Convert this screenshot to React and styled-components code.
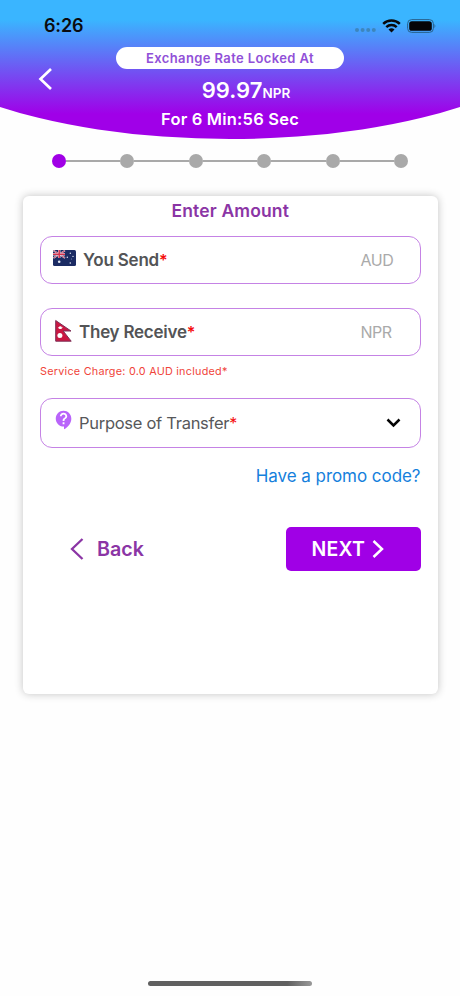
import styled, { createGlobalStyle } from "styled-components";
import { MdContactSupport } from "react-icons/md";

const GlobalStyle = createGlobalStyle`
  * {
    box-sizing: border-box;
  }
  body {
    margin: 0;
    background-color: #fff;
    font-family: Inter, "Liberation Sans", sans-serif;
  }
  svg {
    flex-shrink: 0;
  }
`;

const Screen = styled.div`
  display: flex;
  flex-direction: column;
  width: 460px;
  height: 996px;
  overflow: hidden;
  background-color: #fefefe;
`;

const Header = styled.header`
  height: 139px;
  flex-shrink: 0;
  color: #fff;
  background: linear-gradient(#3ab5ff 20px, #a000e8 114px);
  clip-path: ellipse(345px 126px at 50% 13px);
`;

const StatusBar = styled.div`
  display: flex;
  align-items: center;
  justify-content: space-between;
  height: 47px;
  padding: 4px 23px 0 44px;
  color: #0b0b0f;
`;

const Label = styled.span`
  font-size: ${(props) => props.$size}px;
  font-weight: ${(props) => props.$weight || 400};
  letter-spacing: ${(props) => props.$spacing || 0}px;
  color: ${(props) => props.$color || "inherit"};
  white-space: nowrap;
`;

const StatusIcons = styled.div`
  display: flex;
  align-items: center;
  gap: 6px;
`;

const HeaderBody = styled.div`
  display: grid;
  grid-template-columns: 76px 1fr 76px;
  height: 92px;
`;

const BackArrow = styled.button`
  display: flex;
  align-items: flex-start;
  padding: 21px 0 0 38px;
  border: none;
  background: none;
`;

const Rate = styled.div`
  display: flex;
  flex-direction: column;
  align-items: center;
`;

const Pill = styled.div`
  display: flex;
  align-items: center;
  justify-content: center;
  width: 228px;
  height: 22px;
  border-radius: 11px;
  background-color: #fff;
`;

const RateValue = styled.div`
  display: flex;
  align-items: baseline;
  height: 27px;
  margin-top: 8px;
  padding-left: 32px;
  line-height: 27px;
`;

const Countdown = styled.div`
  height: 22px;
  margin-top: 4px;
  line-height: 22px;
`;

const Stepper = styled.div`
  display: flex;
  align-items: center;
  height: 14px;
  margin: 15px 52px 0;
`;

const StepDot = styled.span`
  width: 14px;
  height: 14px;
  flex-shrink: 0;
  border-radius: 50%;
  background-color: ${(props) => (props.$active ? "#a000e6" : "#a9a9a9")};
`;

const StepLine = styled.span`
  flex: 1;
  height: 2px;
  background-color: #a9a9a9;
`;

const Card = styled.main`
  display: flex;
  flex-direction: column;
  width: 415px;
  height: 498px;
  margin: 28px auto 0;
  padding: 0 17px 0 17.5px;
  border-radius: 6px;
  background-color: #fff;
  box-shadow: 0 0 9px rgba(0, 0, 0, 0.24);
`;

const Title = styled.h1`
  height: 40px;
  margin: 0;
  padding-top: 3px;
  line-height: 23px;
  text-align: center;
  font-size: 18px;
`;

const Field = styled.div`
  display: flex;
  align-items: center;
  flex-shrink: 0;
  height: ${(props) => props.$height || 48}px;
  margin-bottom: ${(props) => props.$gap || 0}px;
  padding: 0 27px 0 12px;
  border: 1px solid #c583e5;
  border-radius: 12px;
`;

const FieldIcon = styled.span`
  display: flex;
  flex-shrink: 0;
  width: ${(props) => props.$width}px;
  padding: 0 0 ${(props) => props.$lift || 0}px ${(props) => props.$left || 0}px;
`;

const FieldEnd = styled.span`
  display: flex;
  width: ${(props) => props.$width || 32}px;
  margin-left: auto;
`;

const Note = styled.div`
  height: 42px;
  padding-top: 6px;
  line-height: 15px;
`;

const Promo = styled.a`
  align-self: flex-end;
  height: 79px;
  padding-top: 17px;
  line-height: 23px;
`;

const Actions = styled.div`
  display: flex;
  align-items: center;
  justify-content: space-between;
  height: 44px;
`;

const BackButton = styled.button`
  display: flex;
  align-items: center;
  gap: 13px;
  padding: 0 0 0 30px;
  border: none;
  background: none;
  font-family: inherit;
`;

const NextButton = styled.button`
  display: flex;
  align-items: center;
  gap: 7px;
  width: 135px;
  height: 44px;
  padding: 0 0 0 26px;
  border: none;
  border-radius: 5px;
  background-color: #a000e6;
  color: #fff;
  font-family: inherit;
`;

const HomeIndicator = styled.div`
  width: 164px;
  height: 5px;
  margin: auto auto 10px;
  border-radius: 3px;
  background: linear-gradient(90deg, #606060 85%, #999);
`;

const Required = styled.span`
  font-size: 16px;
  color: #f50d0d;
`;

const Chevron = ({ width, height, points, color, stroke = 2.5 }) => (
  <svg width={width} height={height} viewBox={`0 0 ${width} ${height}`}>
    <polyline points={points} fill="none" stroke={color} strokeWidth={stroke} />
  </svg>
);

const SignalDots = () => (
  <svg width="21" height="4" viewBox="0 0 21 4" style={{ marginTop: 9 }}>
    {[2, 7.6, 13.2, 18.8].map((x) => (
      <circle key={x} cx={x} cy="2" r="2" fill="#3d86bd" />
    ))}
  </svg>
);

const Wifi = () => (
  <svg width="19" height="14" viewBox="0 0 19 14">
    <g fill="none" stroke="#08080c" strokeWidth="2.5">
      <path d="M1.2 4.9A12 12 0 0 1 17.8 4.9" />
      <path d="M4.3 8.2A7.5 7.5 0 0 1 14.7 8.2" />
    </g>
    <path d="M6.5 10.6a4.3 4.3 0 0 1 6 0L9.5 13.6z" fill="#08080c" />
  </svg>
);

const Battery = () => (
  <svg width="30" height="14" viewBox="0 0 30 14">
    <rect x="0.6" y="0.6" width="25.8" height="12.8" rx="4" fill="none" stroke="#28628e" />
    <rect x="2.2" y="2.2" width="22.6" height="9.6" rx="2.6" fill="#050507" />
    <path d="M27.5 4.8q1.8 2.2 0 4.4z" fill="#28628e" />
  </svg>
);

const AustraliaFlag = () => (
  <svg width="23" height="16" viewBox="0 0 23 16">
    <rect width="23" height="16" rx="1.5" fill="#1b2b63" />
    <path d="M0.5 0.5L12 8M12 0.5L0.5 8" stroke="#e4dbea" strokeWidth="1.5" />
    <path d="M0.5 0.5L12 8M12 0.5L0.5 8" stroke="#c8324f" strokeWidth="0.8" />
    <path d="M6.2 0V8M0 4.2H12" stroke="#eee5ef" strokeWidth="2.4" />
    <path d="M6.2 0V8M0 4.2H12" stroke="#d0304c" strokeWidth="1.5" />
    <g fill="#e2e8f4">
      <circle cx="6.2" cy="11.8" r="1.3" />
      <circle cx="17.3" cy="3.2" r="0.7" />
      <circle cx="14.3" cy="7.3" r="0.7" />
      <circle cx="20" cy="6.4" r="0.7" />
      <circle cx="18.4" cy="9" r="0.4" />
      <circle cx="17.3" cy="13" r="0.8" />
    </g>
  </svg>
);

const NepalFlag = () => (
  <svg width="18" height="24" viewBox="0 0 18 24">
    <path d="M0.7 1.5L16 12H8.2L16.2 22.2H0.7z" fill="#ca1742" stroke="#7d3158" strokeWidth="1" />
    <path d="M2.8 8a2.6 2.6 0 0 0 5 0q-2.5 1.4-5 0z" fill="#fff" />
    <circle cx="5.3" cy="8.6" r="1.4" fill="#fff" />
    <circle cx="4.9" cy="16.6" r="2.5" fill="#fff" />
  </svg>
);

const STEPS = [1, 2, 3, 4, 5, 6];

const App = () => {
  const currentStep = 1;

  return (
    <Screen>
      <GlobalStyle />
      <Header>
        <StatusBar>
          <Label $size={18} $weight={600} $spacing={-0.15}>6:26</Label>
          <StatusIcons>
            <SignalDots />
            <Wifi />
            <Battery />
          </StatusIcons>
        </StatusBar>
        <HeaderBody>
          <BackArrow aria-label="Back">
            <Chevron width={15} height={22} points="13,1 2.5,11 13,21" color="#fff" stroke={2.7} />
          </BackArrow>
          <Rate>
            <Pill>
              <Label $size={13} $weight={600} $spacing={0.38} $color="#9150d8">
                Exchange Rate Locked At
              </Label>
            </Pill>
            <RateValue>
              <Label $size={22} $weight={600}>99.97</Label>
              <Label $size={13.5} $weight={600}>NPR</Label>
            </RateValue>
            <Countdown>
              <Label $size={16.5} $weight={600} $spacing={0.2}>For 6 Min:56 Sec</Label>
            </Countdown>
          </Rate>
        </HeaderBody>
      </Header>

      <Stepper>
        {STEPS.map((step) => [
          step > 1 && <StepLine key={`line-${step}`} />,
          <StepDot key={step} $active={step === currentStep} />,
        ])}
      </Stepper>

      <Card>
        <Title>
          <Label $size={17.5} $weight={600} $spacing={0.15} $color="#8b35a5">Enter Amount</Label>
        </Title>

        <Field $gap={24}>
          <FieldIcon $width={30} $lift={4}>
            <AustraliaFlag />
          </FieldIcon>
          <Label $size={17} $weight={600} $spacing={-0.2} $color="#535456">
            You Send<Required>*</Required>
          </Label>
          <FieldEnd>
            <Label $size={16} $spacing={-0.5} $color="#aaa">AUD</Label>
          </FieldEnd>
        </Field>

        <Field>
          <FieldIcon $width={26} $left={2} $lift={3}>
            <NepalFlag />
          </FieldIcon>
          <Label $size={17} $weight={600} $spacing={-0.25} $color="#535456">
            They Receive<Required>*</Required>
          </Label>
          <FieldEnd>
            <Label $size={16} $spacing={-0.5} $color="#aaa">NPR</Label>
          </FieldEnd>
        </Field>

        <Note>
          <Label $size={10.8} $spacing={0.25} $color="#f0443a">
            Service Charge: 0.0 AUD included*
          </Label>
        </Note>

        <Field $height={50}>
          <FieldIcon $width={26} $lift={6}>
            <MdContactSupport size={22} color="#b964fa" />
          </FieldIcon>
          <Label $size={16.5} $spacing={-0.28} $color="#57585a">
            Purpose of Transfer<Required>*</Required>
          </Label>
          <FieldEnd $width={7}>
            <Chevron width={15} height={10} points="1.5,1.5 7.5,7.5 13.5,1.5" color="#050505" />
          </FieldEnd>
        </Field>

        <Promo>
          <Label $size={17} $spacing={-0.05} $color="#1580dc">Have a promo code?</Label>
        </Promo>

        <Actions>
          <BackButton>
            <Chevron width={14} height={22} points="12.5,1 2,11 12.5,21" color="#8b35a5" stroke={2.3} />
            <Label $size={19.7} $weight={600} $color="#8b35a5">Back</Label>
          </BackButton>
          <NextButton>
            <Label $size={19.5} $weight={600} $spacing={0.2}>NEXT</Label>
            <Chevron width={12} height={18} points="1.5,1 10,9 1.5,17" color="#fff" />
          </NextButton>
        </Actions>
      </Card>

      <HomeIndicator />
    </Screen>
  );
};

export default App;
